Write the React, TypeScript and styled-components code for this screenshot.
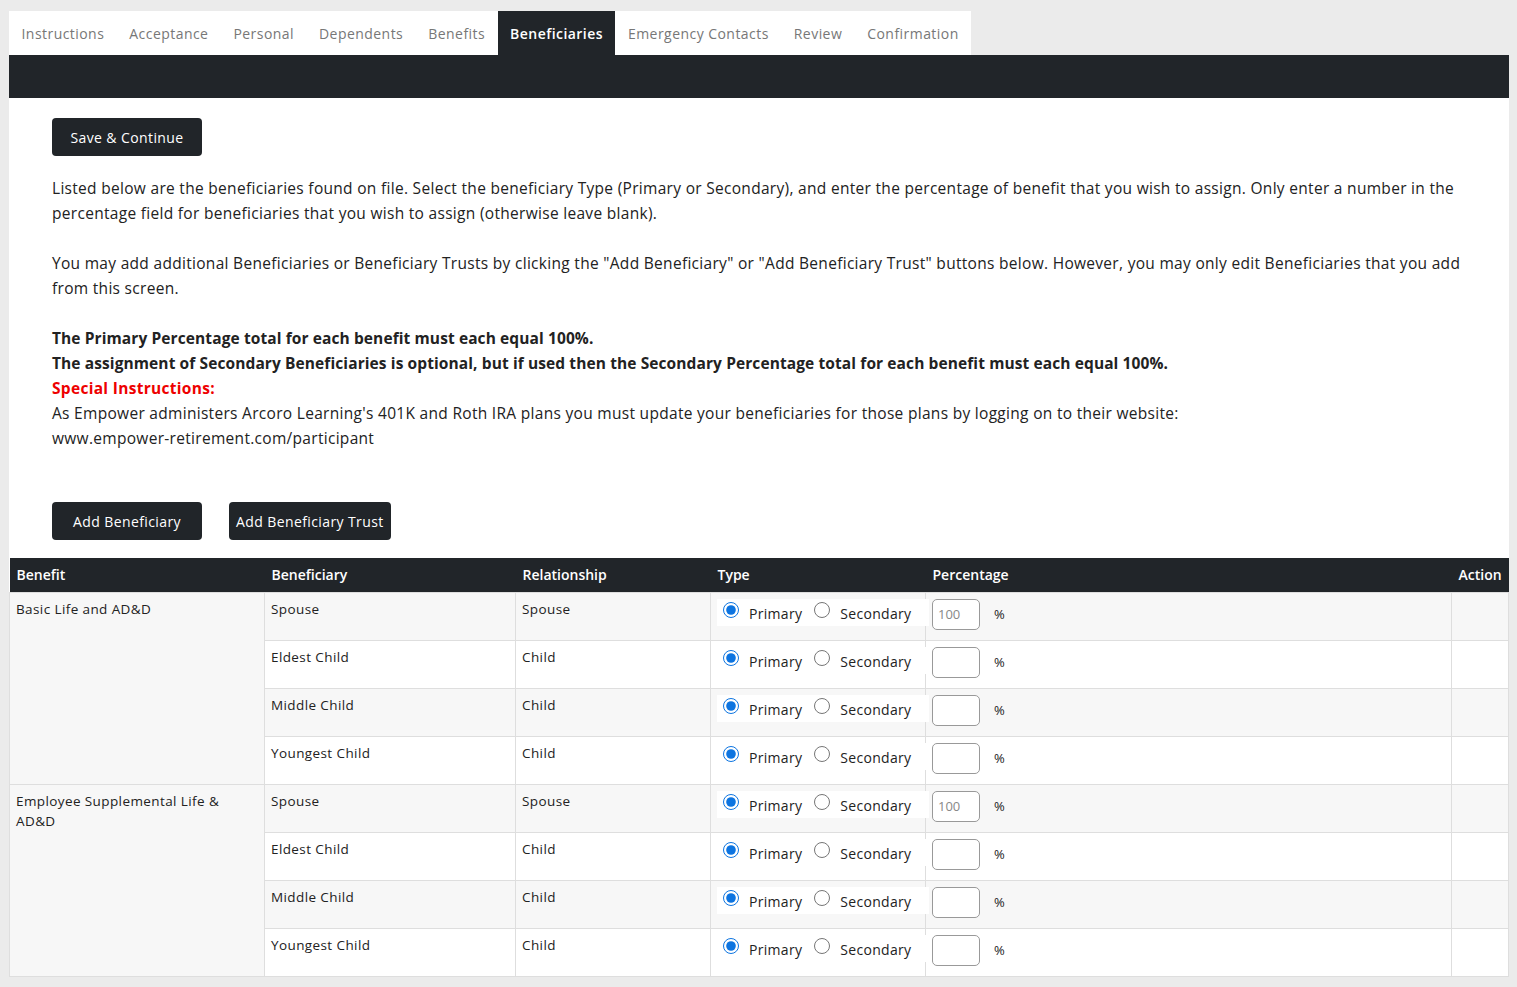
import React from "react";
import styled, { createGlobalStyle } from "styled-components";

const G = createGlobalStyle`
  body { margin: 0; background: #ebebeb; font-family: "Open Sans", "Noto Sans", sans-serif; color: #222; }
`;
const Page = styled.div`margin: 11px 8px 0 9px; width: 1500px;`;
const Tabs = styled.div`display: flex; background: #ebebeb;`;
const TabList = styled.div`display: flex; background: #fff;`;
const Tab = styled.div<{ $active?: boolean }>`
  height: 44px; display: flex; align-items: center; padding: 0 12.5px; font-size: 14px; letter-spacing: 0.45px;
  color: ${p => (p.$active ? "#fff" : "#777")}; background: ${p => (p.$active ? "#212529" : "#fff")};
  font-weight: ${p => (p.$active ? 600 : 400)};
`;
const DarkBar = styled.div`height: 43px; background: #212529;`;
const Content = styled.div`background: #fff; padding: 20px 0 0;`;
const Inner = styled.div`padding: 0 44px 0 43px;`;
const Btn = styled.button<{ $w?: number; $pad?: number }>`
  background: #212529; color: #fff; border: none; border-radius: 4px; height: 38px; padding: 0 ${p => p.$pad ?? 17}px;
  font-family: inherit; font-size: 14px; font-weight: 500; letter-spacing: 0.4px;
  min-width: ${p => (p.$w ? p.$w + "px" : "auto")};
`;
const Para = styled.p`font-size: 15.5px; line-height: 25px; margin: 20px 0 25px; color: #222; letter-spacing: 0.3px;`;
const Block = styled.div`font-size: 15.5px; line-height: 25px; color: #222; letter-spacing: 0.3px;`;
const Bold = styled.div`font-weight: 700; letter-spacing: 0.1px;`;
const Red = styled.div`font-weight: 700; color: #e00;`;
const BtnRow = styled.div`display: flex; gap: 27px; margin: 51px 0 18px;`;
const Table = styled.table`width: 100%; border-collapse: collapse; font-size: 13.5px; table-layout: fixed;`;
const Th = styled.th<{ $w?: number; $right?: boolean }>`
  background: #212529; color: #fff; font-weight: 600; text-align: ${p => (p.$right ? "right" : "left")};
  height: 34px; padding: 0 7px 0 7px; width: ${p => (p.$w ? p.$w + "px" : "auto")}; font-size: 14px; box-sizing: border-box;
`;
const Tr = styled.tr<{ $odd: boolean }>`background: ${p => (p.$odd ? "#f7f7f7" : "#fff")};`;
const Td = styled.td`
  border: 1px solid #dedede; vertical-align: top; padding: 6px 6px 0 6px; height: 41px; letter-spacing: 0.4px;
  line-height: 20px; white-space: nowrap;
`;
const BenefitTd = styled(Td)`background: #f7f7f7; white-space: normal; padding-right: 30px;`;
const TypeBox = styled.div`
  display: inline-flex; align-items: center; background: #fff; padding: 2px 10px 2px 0; margin-top: 0;
`;
const Radio = styled.input`margin: 0 10px 4px 6px; width: 16px; height: 16px; accent-color: #0d74e0;`;
const Lbl = styled.span`margin-right: 8px; font-size: 14px; padding-top: 3px; letter-spacing: 0.3px;`;
const PctTd = styled(Td)`padding-top: 6px;`;
const Pct = styled.div`display: flex; align-items: center; gap: 14px; font-size: 13px;`;
const Input = styled.input`
  width: 48px; height: 31px; box-sizing: border-box; border: 1px solid #999; border-radius: 5px; font-size: 13px;
  padding: 0 5px; font-family: inherit; color: #888;
`;

const benefits = ["Basic Life and AD&D", "Employee Supplemental Life & AD&D"];
const people = [["Spouse", "Spouse"], ["Eldest Child", "Child"], ["Middle Child", "Child"], ["Youngest Child", "Child"]];

export default function App() {
  let idx = 0;
  return (
    <Page>
      <G />
      <Tabs>
        <TabList>
          {["Instructions", "Acceptance", "Personal", "Dependents", "Benefits", "Beneficiaries", "Emergency Contacts", "Review", "Confirmation"].map(t => (
            <Tab key={t} $active={t === "Beneficiaries"}>{t}</Tab>
          ))}
        </TabList>
      </Tabs>
      <DarkBar />
      <Content>
        <Inner>
          <Btn $w={150}>Save &amp; Continue</Btn>
          <Para>Listed below are the beneficiaries found on file. Select the beneficiary Type (Primary or Secondary), and enter the percentage of benefit that you wish to assign. Only enter a number in the percentage field for beneficiaries that you wish to assign (otherwise leave blank).</Para>
          <Para>You may add additional Beneficiaries or Beneficiary Trusts by clicking the "Add Beneficiary" or "Add Beneficiary Trust" buttons below. However, you may only edit Beneficiaries that you add from this screen.</Para>
          <Block>
            <Bold>The Primary Percentage total for each benefit must each equal 100%.</Bold>
            <Bold>The assignment of Secondary Beneficiaries is optional, but if used then the Secondary Percentage total for each benefit must each equal 100%.</Bold>
            <Red>Special Instructions:</Red>
            <div>As Empower administers Arcoro Learning's 401K and Roth IRA plans you must update your beneficiaries for those plans by logging on to their website:</div>
            <div>www.empower-retirement.com/participant</div>
          </Block>
          <BtnRow>
            <Btn $w={150}>Add Beneficiary</Btn>
            <Btn $pad={7} $w={159}>Add Beneficiary Trust</Btn>
          </BtnRow>
        </Inner>
        <Table>
          <thead>
            <tr>
              <Th $w={255}>Benefit</Th><Th $w={251}>Beneficiary</Th><Th $w={195}>Relationship</Th>
              <Th $w={215}>Type</Th><Th $w={526}>Percentage</Th><Th $right>Action</Th>
            </tr>
          </thead>
          <tbody>
            {benefits.map(b =>
              people.map(([n, r], pi) => {
                const odd = pi % 2 === 0;
                const k = idx++;
                return (
                  <Tr key={k} $odd={odd}>
                    {pi === 0 && <BenefitTd rowSpan={4}>{b}</BenefitTd>}
                    <Td>{n}</Td>
                    <Td>{r}</Td>
                    <Td>
                      <TypeBox>
                        <Radio type="radio" name={"t" + k} defaultChecked />
                        <Lbl>Primary</Lbl>
                        <Radio type="radio" name={"t" + k} style={{ marginLeft: 4 }} />
                        <Lbl>Secondary</Lbl>
                      </TypeBox>
                    </Td>
                    <PctTd>
                      <Pct><Input defaultValue={pi === 0 ? "100" : ""} /><span>%</span></Pct>
                    </PctTd>
                    <Td />
                  </Tr>
                );
              })
            )}
          </tbody>
        </Table>
      </Content>
    </Page>
  );
}
